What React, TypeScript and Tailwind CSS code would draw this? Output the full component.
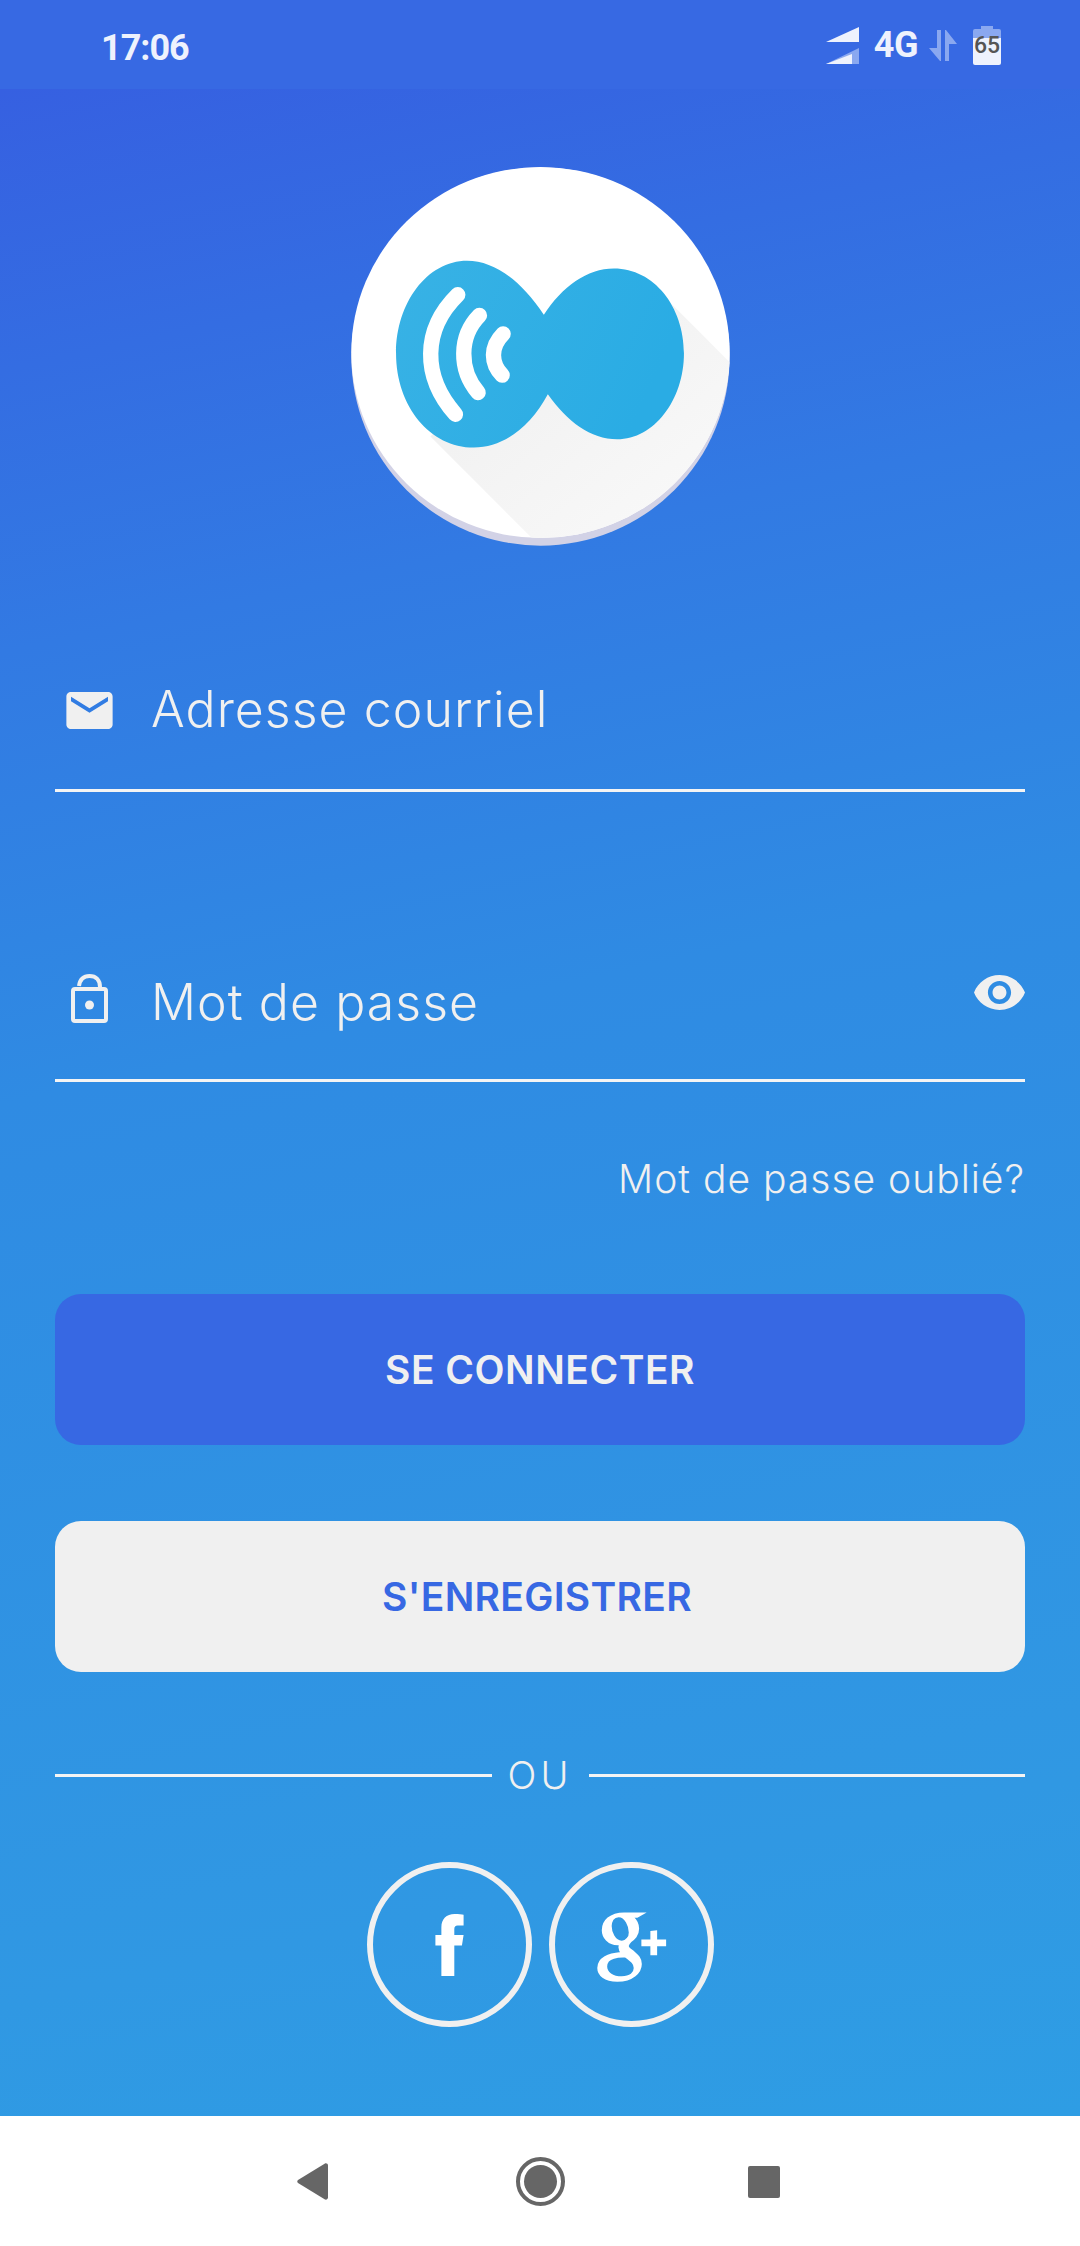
import React from 'react';
import { TiSocialGooglePlus } from 'react-icons/ti';

function Logo() {
  return (
    <svg viewBox="62 52 1136 1136" className="w-[379px] h-[379px] block">
      <defs>
        <clipPath id="disc">
          <ellipse cx="630" cy="608" rx="567" ry="556" />
        </clipPath>
        <linearGradient id="tail" x1="0" y1="0" x2="1" y2="1">
          <stop offset="0" stopColor="#eeeeee" />
          <stop offset="1" stopColor="#fcfcfc" />
        </linearGradient>
        <linearGradient id="blob" x1="0" y1="0" x2="1" y2="0.3">
          <stop offset="0" stopColor="#38b2e5" />
          <stop offset="1" stopColor="#2aace4" />
        </linearGradient>
      </defs>
      <circle cx="630" cy="620" r="567" fill="#d2d2e6" />
      <ellipse cx="630" cy="608" rx="567" ry="556" fill="#ffffff" />
      <polygon points="1020,460 1320,760 1320,1300 740,1300 300,860 640,500" fill="url(#tail)" clipPath="url(#disc)" />
      <path
        d="M640 495C570 390 490 333 410 333C290 333 197 460 197 610C197 770 300 893 430 893C520 893 600 830 652 733C710 815 780 868 860 868C970 868 1060 750 1060 610C1060 470 970 356 850 356C770 356 695 410 640 495Z"
        fill="url(#blob)"
      />
      <g fill="none" stroke="#ffffff" strokeWidth="46" strokeLinecap="round">
        <path d="M382 435C275 540 275 680 375 793" />
        <path d="M447 497C385 560 385 660 443 728" />
        <path d="M518 552C480 590 480 640 515 676" />
      </g>
    </svg>
  );
}

function StatusBar() {
  return (
    <div className="h-[89px] bg-[#3769e3] flex items-center justify-between pl-[101px] pr-[79px] font-['Roboto',sans-serif] text-[#eef2fd]">
      <span className="text-[36px] font-bold tracking-[-1px] leading-none mt-[6px]">17:06</span>
      <div className="flex items-center mt-[1px]">
        <svg width="33" height="37" viewBox="0 0 33 37">
          <path d="M33 0V15H0Z" fill="#eef2fd" />
          <path d="M33 21V37H0Z" fill="#8aa8f0" />
          <path d="M26 27V37H0Z" fill="#eef2fd" />
        </svg>
        <span className="ml-[15px] text-[36px] font-bold tracking-[-0.5px] leading-none">4G</span>
        <svg width="28" height="31" viewBox="0 0 28 31" className="ml-[11px]" fill="#8aa8f0">
          <path d="M8 0H12V31H11L0 18H8Z" />
          <path d="M16 0H17L28 14H20V31H16Z" />
        </svg>
        <div className="ml-[16px] w-[28px] h-[39px]">
          <div className="mx-auto w-[12px] h-[3px] bg-[#8aa8f0]" />
          <div className="h-[9px] bg-[#8aa8f0] rounded-t-[2px]" />
          <div className="h-[27px] bg-[#eef2fd] rounded-b-[2px] flex items-start justify-center">
            <span className="text-[23px] leading-[22px] font-medium text-[#555555] -mt-[3px]">65</span>
          </div>
        </div>
      </div>
    </div>
  );
}

function MailIcon() {
  return (
    <svg viewBox="2 4 20 16" className="w-[47px] h-[37px] ml-[11px] mt-[13px] fill-[#f0f0f0] shrink-0">
      <path d="M20 4H4c-1.1 0-2 .9-2 2v12c0 1.1.9 2 2 2h16c1.1 0 2-.9 2-2V6c0-1.1-.9-2-2-2zm0 4l-8 5-8-5V6l8 5 8-5v2z" />
    </svg>
  );
}

function LockIcon() {
  return (
    <svg viewBox="0 0 37 49" className="w-[37px] h-[49px] ml-[16px] mt-[5px] shrink-0" fill="none" stroke="#f0f0f0" strokeWidth="4">
      <rect x="2" y="15" width="33" height="32" rx="2" />
      <path d="M8 12C9 5 13 2 18.500 2C25 2 29 6 29 13V16" />
      <circle cx="18.500" cy="31" r="4.500" fill="#f0f0f0" stroke="none" />
    </svg>
  );
}

function EyeIcon() {
  return (
    <svg viewBox="1 4.500 22 15" className="w-[51px] h-[35px] mt-[6px] fill-[#f0f0f0] shrink-0">
      <path d="M12 4.500C7 4.500 2.730 7.610 1 12c1.730 4.390 6 7.500 11 7.500s9.270-3.110 11-7.500c-1.730-4.390-6-7.500-11-7.500zM12 17c-2.760 0-5-2.240-5-5s2.240-5 5-5 5 2.240 5 5-2.240 5-5 5zm0-8c-1.660 0-3 1.340-3 3s1.340 3 3 3 3-1.340 3-3-1.340-3-3-3z" />
    </svg>
  );
}

function FacebookIcon() {
  return (
    <svg viewBox="285 218 85 187" className="w-[29px] h-[62px] fill-white">
      <path d="M370 220V253H352C345 253 342 257 342 264V281H370L365 313H342V405H303V313H285V281H303V258C303 233 318 218 343 218C355 218 365 219 370 220Z" />
    </svg>
  );
}

export default function App() {
  return (
    <div className="w-[1080px] h-[2246px] flex flex-col font-['Inter',sans-serif] overflow-hidden">
      <StatusBar />
      <main className="h-[2027px] px-[55px] flex flex-col bg-[linear-gradient(168deg,#3660e1_0%,#327ae3_25%,#2f8be3_45%,#3098e3_85%,#2e9de4_100%)]">
        <div className="mt-[78px] self-center">
          <Logo />
        </div>

        <div className="mt-[94px] h-[152px] border-b-[3px] border-[#f4f4f4] pt-[39px] flex items-start">
          <MailIcon />
          <span className="ml-[38px] text-[50px] leading-[60px] font-light tracking-[1.05px] text-[#f0f0f0]">Adresse courriel</span>
        </div>

        <div className="mt-[138px] h-[152px] border-b-[3px] border-[#f4f4f4] pt-[39px] flex items-start">
          <LockIcon />
          <span className="ml-[43px] mt-[3px] flex-1 text-[50px] leading-[60px] font-light tracking-[1.05px] text-[#f0f0f0]">Mot de passe</span>
          <EyeIcon />
        </div>

        <a className="mt-[73px] self-end text-[39px] leading-[48px] font-light tracking-[1px] text-[#f0f0f0]">Mot de passe oublié?</a>

        <button className="mt-[91px] h-[151px] pt-[2px] rounded-[26px] bg-[#3768e3] text-[#f0f0f0] text-[39px] tracking-[0.5px] font-semibold">SE CONNECTER</button>
        <button className="mt-[76px] h-[151px] pt-[2px] rounded-[26px] bg-[#f0f0f0] text-[#3768e3] text-[39px] tracking-[0.3px] font-semibold pr-[6px]">S'ENREGISTRER</button>

        <div className="mt-[76px] flex items-center h-[54px]">
          <div className="flex-1 h-[3px] bg-[#f4f4f4]" />
          <span className="w-[97px] text-center text-[38px] tracking-[4px] font-light text-[#f0f0f0]">OU</span>
          <div className="flex-1 h-[3px] bg-[#f4f4f4]" />
        </div>

        <div className="mt-[60px] flex justify-center gap-[17px]">
          <div className="w-[165px] h-[165px] rounded-full border-[6px] border-[#f0f0f0] flex items-center justify-center">
            <FacebookIcon />
          </div>
          <div className="w-[165px] h-[165px] rounded-full border-[6px] border-[#f0f0f0] flex items-center justify-center pr-[5px]">
            <TiSocialGooglePlus className="text-white w-[108px] h-[108px] shrink-0 stroke-white stroke-[0.5px]" />
          </div>
        </div>
      </main>
      <nav className="h-[130px] bg-white pt-[41px] pl-[297px] flex items-start">
        <div className="h-[49px] flex items-center gap-[188px]">
          <svg width="31" height="37" viewBox="0 0 31 37" className="fill-[#666666]">
            <path d="M28 0.500C29.500 0 31 1 31 2.500V34.500C31 36 29.500 37 28 36.500L1 20C0 19 0 18 1 17Z" />
          </svg>
          <div className="flex items-center gap-[183px]">
            <div className="w-[49px] h-[49px] rounded-full border-[4px] border-[#666666] p-[4px]">
              <div className="w-full h-full rounded-full bg-[#666666]" />
            </div>
            <div className="w-[32px] h-[32px] rounded-[2px] bg-[#666666]" />
          </div>
        </div>
      </nav>
    </div>
  );
}
